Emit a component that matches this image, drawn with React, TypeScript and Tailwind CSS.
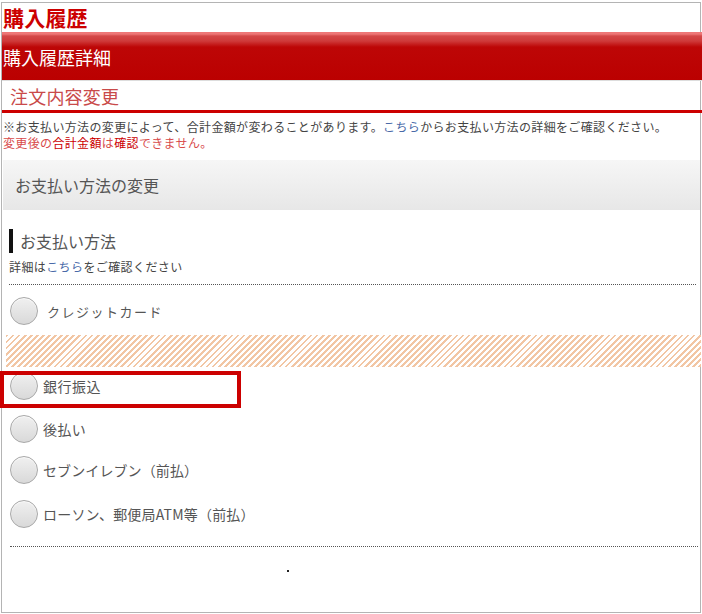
import React from "react";

function Radio({ label, gap, tracking, size }: { label: string; gap: string; tracking: string; size: string }) {
  return (
    <div className={`flex items-center ${gap} ml-[1px]`}>
      <div className="w-[28px] h-[28px] shrink-0 rounded-full border border-[#a8a8a8] bg-[linear-gradient(to_bottom,#f0f0f0,#d9d9d9)] shadow-[inset_0_1px_1px_rgba(255,255,255,0.8)]" />
      <span className={`${size} ${tracking} text-[#555] leading-none`}>{label}</span>
    </div>
  );
}

export default function App() {
  return (
    <div className="w-[702px] h-[614px] bg-white pt-[2px] pl-[1px] font-['Noto_Sans_CJK_JP','Noto_Sans',sans-serif] overflow-hidden">
      <div className="w-[700px] h-[611px] border border-[#b4b4b4] flex flex-col">
        {/* Title */}
        <div className="h-[29px] flex items-center pl-[1px]">
          <span className="text-[21px] font-bold text-[#c00] leading-none tracking-[0.2px]">購入履歴</span>
        </div>
        {/* Red bar */}
        <div className="h-[48px] -mr-[3px] flex items-center pl-[1px] bg-[linear-gradient(to_bottom,#e77_0px,#e77_2px,#d44848_4px,#cf3a3a_9px,#bd0606_15px,#bb0000_100%)]">
          <span className="text-[18px] text-white leading-none pt-[2px]">購入履歴詳細</span>
        </div>
        {/* Sub row */}
        <div className="h-[33px] -mr-[3px] border-t border-[#ddd] border-b-[3px] border-b-[#c00] flex items-center pl-[8px]">
          <span className="text-[18px] text-[#c94a4a] leading-none tracking-[0.2px]">注文内容変更</span>
        </div>
        {/* Notice */}
        <div className="pt-[6px] pl-[1px] text-[12px] leading-[16px] tracking-[0.35px] whitespace-nowrap">
          <div className="text-[#444]">
            ※お支払い方法の変更によって、合計金額が変わることがあります。<span className="text-[#4a6aa8]">こちら</span>からお支払い方法の詳細をご確認ください。
          </div>
          <div className="text-[#d84a4a]">
            変更後の<span className="text-[#c00]">合計金額</span>は<span className="text-[#c00]">確認</span>できません。
          </div>
        </div>
        {/* Gray header */}
        <div className="mt-[9px] h-[50px] ml-[1px] flex items-center pl-[12px] bg-[linear-gradient(to_bottom,#f6f6f6,#e7e7e7)]">
          <span className="text-[16px] text-[#555] leading-none">お支払い方法の変更</span>
        </div>
        {/* Content */}
        <div className="pl-[7px] pr-[4px] flex flex-col">
          <div className="mt-[19px] h-[24px] border-l-[4px] border-[#111] flex items-center pl-[7px]">
            <span className="text-[16px] text-[#555] leading-none">お支払い方法</span>
          </div>
          <div className="mt-[6px] text-[12px] leading-[15px] tracking-[0.4px] text-[#444]">
            詳細は<span className="text-[#4a6aa8]">こちら</span>をご確認ください
          </div>
          <div className="mt-[10px] border-t border-dotted border-[#555]" />
          <div className="mt-[12px]">
            <Radio label="クレジットカード" gap="gap-[9px]" tracking="tracking-[1.5px]" size="text-[13px]" />
          </div>
          <div className="mt-[10px] h-[32px] -ml-[3px] -mr-[5px] bg-[repeating-linear-gradient(135deg,#f2c6a4_0px,#f2c6a4_2px,#ffffff_2px,#ffffff_4.3px)]" />
          <div className="mt-[5px] relative">
            <Radio label="銀行振込" gap="gap-[5px]" tracking="tracking-[0.5px]" size="text-[14px]" />
            <div className="absolute left-[-9px] top-[-1px] w-[241px] h-[37px] border-[4px] border-[#c00]" />
          </div>
          <div className="mt-[15px]">
            <Radio label="後払い" gap="gap-[5px]" tracking="tracking-[0.4px]" size="text-[14px]" />
          </div>
          <div className="mt-[13px]">
            <Radio label="セブンイレブン（前払）" gap="gap-[5px]" tracking="tracking-[0.1px]" size="text-[14px]" />
          </div>
          <div className="mt-[16px]">
            <Radio label="ローソン、郵便局ATM等（前払）" gap="gap-[5px]" tracking="tracking-[0.2px]" size="text-[14px]" />
          </div>
          <div className="mt-[18px] ml-[1px] -mr-[2px] border-t border-dotted border-[#555]" />
          <div className="mt-[23px] ml-[278px] w-[2px] h-[2px] bg-[#222]" />
        </div>
      </div>
    </div>
  );
}
